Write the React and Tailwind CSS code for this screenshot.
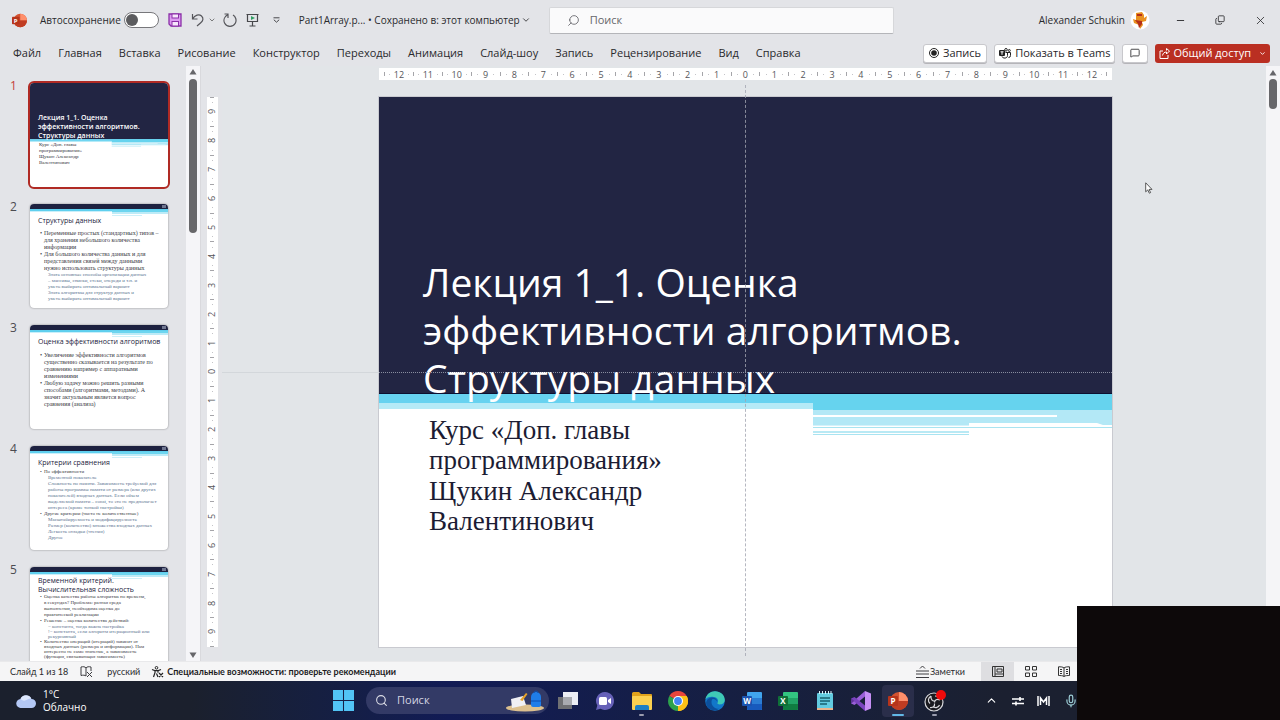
import React from "react";
import { Search, ChevronDown, ChevronUp, Minus, X, Copy, MessageSquare, Mic } from "lucide-react";

const UI = "font-['Open_Sans','Noto_Sans',sans-serif]";

const MENU = ["Файл", "Главная", "Вставка", "Рисование", "Конструктор", "Переходы", "Анимация", "Слайд-шоу", "Запись", "Рецензирование", "Вид", "Справка"];

const SLIDES = [
  {
    title: ["Структуры данных"],
    gap: "mt-[5px]",
    body: [
      { style: "text-[6px] leading-[7px]", t: ["Переменные простых (стандартных) типов –", "для хранения небольшого количества", "информации"] },
      { style: "text-[6px] leading-[7px]", t: ["Для большого количества данных и для", "представления связей между данными", "нужно использовать структуры данных"] },
      { sub: true, style: "text-[5px] leading-[6px]", t: ["Знать основные способы организации данных", "– массивы, списки, стеки, очереди и т.п. и", "уметь выбирать оптимальный вариант", "Знать алгоритмы для структур данных и", "уметь выбирать оптимальный вариант"] },
    ],
  },
  {
    title: ["Оценка эффективности алгоритмов"],
    gap: "mt-[6px]",
    body: [
      { style: "text-[6px] leading-[7px]", t: ["Увеличение эффективности алгоритмов", "существенно сказывается на результате по", "сравнению например с аппаратными", "изменениями"] },
      { style: "text-[6px] leading-[7px]", t: ["Любую задачу можно решить разными", "способами (алгоритмами, методами). А", "значит актуальным является вопрос", "сравнения (анализа)"] },
    ],
  },
  {
    title: ["Критерии сравнения"],
    gap: "mt-[2px]",
    body: [
      { style: "text-[5px] leading-[6px]", t: ["По эффективности"] },
      { sub: true, style: "text-[5px] leading-[6px]", t: ["Временной показатель", "Сложность по памяти. Зависимость требуемой для", "работы программы памяти от размера (или других", "показателей) входных данных. Если объем", "выделяемой памяти – const, то это не предполагает", "интереса (кроме тонкой настройки)"] },
      { style: "text-[5px] leading-[6px]", t: ["Другие критерии (часто не количественные)"] },
      { sub: true, style: "text-[5px] leading-[6px]", t: ["Масштабируемость и модифицируемость", "Размер (количество) множества входных данных", "Легкость отладки (чтения)", "Другое"] },
    ],
  },
  {
    title: ["Временной критерий.", "Вычислительная сложность"],
    gap: "mt-0",
    body: [
      { style: "text-[5px] leading-[6px]", t: ["Оценка качества работы алгоритма по времени,", "в секундах? Проблема: разная среда", "выполнения, необходима оценка до", "практической реализации"] },
      { style: "text-[5px] leading-[6px]", t: ["Решение – оценка количества действий:"] },
      { sub: true, style: "text-[5px] leading-[5px]", t: ["= константа, тогда важна настройка", "!= константа, если алгоритм итерационный или", "рекурсивный"] },
      { style: "text-[5px] leading-[5px]", t: ["Количество операций (итераций) зависит от", "входных данных (размера и информации). Нам", "интересно не само значение, а зависимость", "(функция, связывающая зависимость)"] },
    ],
  },
];

function TitleArt() {
  return (
    <svg className="absolute inset-0 h-full w-full" viewBox="0 0 733 550" preserveAspectRatio="none" aria-hidden="true">
      <rect width="733" height="297" fill="#222543" />
      <rect y="296" width="733" height="1" fill="#0c1030" />
      <rect y="297" width="733" height="10" fill="#67d2f0" />
      <rect y="306" width="434" height="6" fill="#b5eaf7" />
      <rect x="434" y="297" width="299" height="16" fill="#66d3ee" />
      <rect x="434" y="313" width="299" height="15" fill="#b3e8f6" />
      <rect x="434" y="318" width="244" height="2" fill="#fff" />
      <path d="M590 326h128l6 2h9v2H590z" fill="#fff" />
      <rect x="434" y="328" width="156" height="1" fill="#d4f2fa" />
      <rect x="434" y="330" width="299" height="1" fill="#a9e4f1" />
      <rect x="434" y="334" width="156" height="2" fill="#b9e9f4" />
      <rect x="434" y="337" width="156" height="1" fill="#a9e4f1" />
    </svg>
  );
}

function ContentArt() {
  return (
    <svg className="absolute inset-0 h-full w-full" viewBox="0 0 138 104" preserveAspectRatio="none" aria-hidden="true">
      <rect width="138" height="5" fill="#1d2140" />
      <rect y="5" width="138" height="2" fill="#5fcfee" />
      <rect y="7" width="82" height="1" fill="#c9effa" />
      <rect x="82" y="6" width="56" height="2" fill="#6dd5ef" />
      <rect x="82" y="8" width="56" height="2" fill="#bdebf7" />
      <rect x="82" y="11" width="30" height="1" fill="#cdf0f9" />
      <rect x="132" y="1" width="4" height="3" fill="#6f7690" />
    </svg>
  );
}

function SlideThumb({ n, children, active }) {
  return (
    <li className="flex items-start">
      <span className={`-mt-1 w-[30px] shrink-0 pl-[10px] text-[12px] leading-[14px] ${active ? "text-[#c43e3a]" : "text-[#4b4b50]"}`}>{n}</span>
      <button
        aria-label={`Слайд ${n}`}
        className={`relative flex aspect-[138/104] w-[138px] shrink-0 flex-col items-stretch justify-start overflow-hidden rounded-[4px] bg-white text-left ${active ? "outline-2 outline-[#b02a24]" : "shadow-[0_0_2px_rgba(0,0,0,0.45)]"}`}
      >
        {children}
      </button>
    </li>
  );
}

function ContentThumb({ slide }) {
  return (
    <>
      <ContentArt />
      <span className={`relative flex flex-col pl-2 ${slide.title.length > 1 ? "pt-[9px]" : "pt-[12px]"}`}>
        {slide.title.map((l) => (
          <span key={l} className="block text-[7px] leading-[9px] whitespace-nowrap text-[#23233c]">{l}</span>
        ))}
        <span className={`flex flex-col font-['Liberation_Serif',serif] ${slide.gap}`}>
          {slide.body.map((b, i) => (
            <span key={i} className={`relative block whitespace-nowrap ${b.style} ${b.sub ? "pl-[10px] text-[#5a7390]" : "pl-[6px] text-[#3a3a44]"}`}>
              {!b.sub && <span className="absolute top-0 left-[2px]">•</span>}
              {b.t.map((l, k) => (
                <span key={k} className="block">{l}</span>
              ))}
            </span>
          ))}
        </span>
      </span>
    </>
  );
}

function Ruler({ max, vertical }) {
  const nums = Array.from({ length: max * 2 + 1 }, (_, i) => Math.abs(i - max));
  const tick = vertical ? "h-px w-1 bg-[#a5a5a9]" : "h-1 w-px bg-[#a5a5a9]";
  const dot = "size-px bg-[#c4c4c8]";
  return (
    <div className={`flex items-center justify-between bg-white text-[9px] leading-[9px] text-[#55555a] ${vertical ? "min-h-0 w-[11px] flex-1 flex-col" : "h-3 px-[5px]"}`}>
      {nums.map((n, i) => (
        <div key={i} className={`flex flex-1 items-center justify-between ${vertical ? "min-h-0 flex-col" : ""}`}>
          <i className={tick} />
          <i className={dot} />
          <span className={vertical ? "-rotate-90" : ""}>{n}</span>
          <i className={dot} />
          <i />
        </div>
      ))}
      <i className={tick} />
    </div>
  );
}

function Arrow({ down }) {
  return (
    <svg viewBox="0 0 8 6" className="h-[6px] w-2 shrink-0" aria-hidden="true">
      <path d={down ? "M0.5 0.5h7L4 6z" : "M0.5 5.5h7L4 0z"} fill="#66666a" />
    </svg>
  );
}

function PptIcon({ className }) {
  return (
    <svg viewBox="0 0 20 20" className={className} aria-hidden="true">
      <circle cx="11" cy="10" r="9" fill="#d35230" />
      <path d="M11 1a9 9 0 0 1 9 9h-9z" fill="#ff8f6b" />
      <path d="M2 10h18a9 9 0 0 1-18 0z" fill="#c03c22" />
      <rect x="0" y="5" width="10" height="10" rx="1" fill="#b7341b" />
      <text x="5" y="13" textAnchor="middle" fontSize="8" fontWeight="700" fill="#fff" fontFamily="Open Sans, sans-serif">P</text>
    </svg>
  );
}

function OfficeIcon({ letter, colors }) {
  return (
    <svg viewBox="0 0 20 20" className="size-5" aria-hidden="true">
      <rect x="5" y="1" width="15" height="18" rx="1" fill={colors[0]} />
      <rect x="5" y="7" width="15" height="6" fill={colors[1]} />
      <path d="M5 13h15v5a1 1 0 0 1-1 1H6a1 1 0 0 1-1-1z" fill={colors[2]} />
      <rect x="0" y="5" width="10" height="10" rx="1" fill={colors[3]} />
      <text x="5" y="13" textAnchor="middle" fontSize="8" fontWeight="700" fill="#fff" fontFamily="Open Sans, sans-serif">{letter}</text>
    </svg>
  );
}

const TASKS = [
  ["Представление задач", <svg viewBox="0 0 20 20" className="size-5"><rect x="5" y="1" width="15" height="13" fill="#eceef4" /><rect x="0" y="6" width="14" height="12" fill="#6f7073" /><rect x="5" y="6" width="9" height="8" fill="#a9abb0" /></svg>],
  ["Чат", <svg viewBox="0 0 20 20" className="size-5"><path d="M10 1a9 9 0 1 1-4.500 16.800L1 19l1.300-4.400A9 9 0 0 1 10 1z" fill="#6661b8" /><rect x="4" y="6" width="8" height="8" rx="1.500" fill="#fff" /><path d="m13 9 3-2v6l-3-2z" fill="#fff" /></svg>],
  ["Проводник", <svg viewBox="0 0 22 20" className="h-5 w-[22px]"><path d="M1 2.500A1.500 1.500 0 0 1 2.500 1H8l2 2h10a1 1 0 0 1 1 1v4H1z" fill="#e0a21c" /><rect x="1" y="5" width="20" height="14" rx="1" fill="#fbd050" /><path d="M4 19v-3a2 2 0 0 1 2-2h10a2 2 0 0 1 2 2v3z" fill="#1e7fc4" /></svg>, "dot"],
  ["Chrome", <svg viewBox="0 0 20 20" className="size-5"><path d="M10 10 1.340 5a10 10 0 0 1 17.320 0z" fill="#e8453c" /><path d="M10 10 18.660 5A10 10 0 0 1 10 20z" fill="#fbc116" /><path d="M10 10v10A10 10 0 0 1 1.340 5z" fill="#2ca24c" /><path d="M10 5h8.700A10 10 0 0 1 10 20l4.300-7.500z" fill="#fbc116" /><circle cx="10" cy="10" r="5" fill="#fff" /><circle cx="10" cy="10" r="3.900" fill="#4285f4" /></svg>],
  ["Edge", <svg viewBox="0 0 20 20" className="size-5"><circle cx="10" cy="10" r="9.800" fill="#1277c9" /><path d="M.4 8.500C1.500 3 5.500.2 10 .2c5.500 0 9.800 4 9.800 8.600 0 3-2.300 4.700-4.800 4.700-2 0-3-.8-2.400-1.700C14.500 8.500 11 5.500 7 5.800 3.500 6 1.200 7 .4 8.500z" fill="#3fc9b6" /><path d="M7 8.500c-1.600 3.500.5 9 7 9.300-4 3-10.500 1.500-12.500-3.300C0 10 3 6.500 7.500 6.500c3 0 4.800 2 4.300 3.800C10.500 8 8.500 7.500 7 8.500z" fill="#0c4f9c" /></svg>],
  ["Word", <OfficeIcon letter="W" colors={["#41a5ee", "#2b7cd3", "#185abd", "#1b53b0"]} />],
  ["Excel", <OfficeIcon letter="X" colors={["#33c481", "#21a366", "#107c41", "#0f7038"]} />],
  ["Блокнот", <svg viewBox="0 0 18 20" className="h-5 w-[18px]"><rect x="1" y="2" width="16" height="17" rx="1" fill="#62cbe0" /><rect x="1" y="17" width="16" height="2" fill="#e9b48b" /><path d="M4 7h10M4 10h10M4 13h7" stroke="#17616f" strokeWidth="1.300" /><path d="M3.500 0v3M6.500 0v3M9.500 0v3M12.500 0v3M15 0v3" stroke="#d8f4fa" /></svg>],
  ["Visual Studio", <svg viewBox="0 0 20 20" className="size-5"><path d="M14 0l6 2.500v15L14 20V0z" fill="#c78ff5" /><path d="M14 0v5.500L3.500 14 0 12.500 1.500 11z" fill="#9a5fd8" /><path d="M0 7.500 3.500 6 14 14.500V20L1.500 9z" fill="#7a43bf" /><path d="M0 7.500v5l3-2.500z" fill="#5f3299" /></svg>],
  ["PowerPoint", <PptIcon className="size-5" />, "active"],
  ["OBS Studio", <svg viewBox="0 0 24 22" className="h-[22px] w-6"><circle cx="11" cy="12" r="9" fill="#1a1a1f" stroke="#d8d8dc" strokeWidth="1.200" /><path d="M8 6c-.5 3.500 1.500 5 3.500 5.200M17 10c-3-1.500-5.500 0-5.500 2.500M7 17.500c3 .5 5-1.500 4.500-4M8 6c-3 2-3.500 5-1 7.500M16.500 15c-1 2.500-4 3.500-6 1.500M12 6c2.500 0 4 1.500 4.500 4" fill="none" stroke="#d8d8dc" strokeWidth="1.200" /><circle cx="18" cy="5" r="5" fill="#f00b0b" /></svg>, "dot"],
];

function RibbonButton({ children, className, label }) {
  return (
    <button aria-label={label} className={`flex h-[19px] items-center gap-1 rounded-[3px] border border-[#c8c8cc] bg-white text-[11px] leading-4 whitespace-nowrap text-[#27272a] shadow-[0_1px_0_#b5b5b9] ${className}`}>
      {children}
    </button>
  );
}

export default function App() {
  return (
    <div className={`${UI} flex h-screen w-full flex-col overflow-hidden bg-[#e3e4e8] text-[#2a2a2d]`}>
      <header className="shrink-0">
        <div className="flex h-10 items-center pl-3">
          <PptIcon className="size-[15px]" />
          <label htmlFor="autosave" className="ml-[13px] text-[10px] whitespace-nowrap">Автосохранение</label>
          <input
            id="autosave"
            type="checkbox"
            className="ml-[3px] h-4 w-[35px] shrink-0 appearance-none rounded-full border border-[#77777b] bg-white p-px before:block before:size-3 before:rounded-full before:bg-[#5c5c5f] before:content-['']"
          />
          <div className="ml-[9px] flex items-center">
            <button aria-label="Сохранить">
              <svg viewBox="0 0 14 14" className="size-[14px]"><path d="M1 1h12v12H3l-2-2z" fill="#dc9af0" stroke="#8b2fa8" strokeWidth="1.300" /><rect x="4" y="1" width="6.500" height="4" fill="#f6e6fb" stroke="#8b2fa8" /><rect x="4" y="8.500" width="6.500" height="4.500" fill="#f6e6fb" stroke="#8b2fa8" /></svg>
            </button>
            <button aria-label="Отменить" className="ml-[9px]">
              <svg viewBox="0 0 13 14" className="h-[14px] w-[13px]"><path d="M1.500 1v5h5M1.500 6C4 2 8 .8 10.500 3s1.500 5-1 7L6 13" fill="none" stroke="#55555a" strokeWidth="1.200" /></svg>
            </button>
            <ChevronDown className="ml-1 size-2 text-[#444]" />
            <button aria-label="Повторить" className="ml-[7px]">
              <svg viewBox="0 0 14 15" className="h-[15px] w-[14px]"><path d="M1.500 1H5v4M5 1.500C1.500 3.500 0 7 1.700 10.300c2 4 8.300 4.300 10.600 0C14 7 12.500 3.500 10 2" fill="none" stroke="#55555a" strokeWidth="1.200" /></svg>
            </button>
            <button aria-label="С начала" className="ml-[9px]">
              <svg viewBox="0 0 13 14" className="h-[14px] w-[13px]"><path d="M.5 1.500h12M1.500 1.500v7h10v-7M6.500 8.500v4M3.500 13h6" fill="none" stroke="#47474b" strokeWidth="1.200" /><path d="m5 3 4 2-4 2z" fill="#2f9f63" /></svg>
            </button>
            <button aria-label="Настройка панели" className="ml-[14px]">
              <svg viewBox="0 0 7 6" className="h-[6px] w-[7px]"><path d="M.5.8h6M.8 2.700 3.500 5.200 6.200 2.700" fill="none" stroke="#47474b" /></svg>
            </button>
          </div>
          <button className="ml-[19px] flex items-center gap-px text-[10px] whitespace-nowrap">
            Part1Array.p... • Сохранено в: этот компьютер <ChevronDown className="size-[10px]" />
          </button>
          <label className="ml-[18px] flex h-[27px] w-[345px] min-w-0 items-center gap-[10px] rounded-[2px] border border-[#d6d7da] border-b-[#b4b5b9] bg-[#fafafb] px-[17px]">
            <Search className="size-[13px] shrink-0 -scale-x-100 text-[#5d5d62]" strokeWidth={1.5} />
            <input aria-label="Поиск" placeholder="Поиск" className="min-w-0 flex-1 bg-transparent text-[11px] outline-none placeholder:text-[#66666a]" />
          </label>
          <div className="ml-auto flex items-center">
            <span className="text-[10px] whitespace-nowrap">Alexander Schukin</span>
            <svg viewBox="0 0 20 20" className="ml-[5px] size-5 shrink-0" aria-hidden="true"><circle cx="10" cy="10" r="9.500" fill="#fff" /><path d="M6 3l6-1 2 3v3l3-2-1 5-4 1 1 3-3 4-1-4-5-2-1-4 3 1z" fill="#e9901f" /><path d="M7 4h5v2H7zM5 10l7 1v3l-3 4-1-4z" fill="#b52f18" /></svg>
            <button aria-label="Свернуть" className="flex w-10 justify-center pl-5"><Minus className="size-[11px]" strokeWidth={2} /></button>
            <button aria-label="Восстановить" className="ml-[10px] flex w-10 justify-center"><Copy className="size-[10px] -scale-y-100" strokeWidth={2} /></button>
            <button aria-label="Закрыть" className="flex w-10 justify-center"><X className="size-[13px]" strokeWidth={1.5} /></button>
          </div>
        </div>
        <div className="flex h-[26px] items-center justify-between pr-[10px] pl-[13px]">
          <nav className="flex gap-[17px] text-[11px] leading-4">
            {MENU.map((m) => <button key={m} className="whitespace-nowrap">{m}</button>)}
          </nav>
          <div className="flex items-center">
            <RibbonButton className="px-[5px]">
              <svg viewBox="0 0 10 10" className="size-[10px]"><circle cx="5" cy="5" r="4.500" fill="none" stroke="#222" /><circle cx="5" cy="5" r="2.800" fill="#222" /></svg>
              Запись
            </RibbonButton>
            <RibbonButton className="ml-[7px] px-1">
              <svg viewBox="0 0 12 11" className="h-[11px] w-3"><rect x="0" y="2" width="6" height="6" rx="1" fill="#222" /><path d="M1.500 3.800h3M3 3.800v3" stroke="#fff" /><circle cx="7" cy="1.800" r="1.300" fill="none" stroke="#222" /><circle cx="10.300" cy="2.500" r="1" fill="none" stroke="#222" /><path d="M6.500 4.500h5v3a2 2 0 0 1-2 2M3 8.500c.5 2 5.500 2.500 5.500-1v-3" fill="none" stroke="#222" /></svg>
              Показать в Teams
            </RibbonButton>
            <RibbonButton className="ml-[7px] px-[6px]" label="Комментарии"><MessageSquare className="mx-px size-[10px]" strokeWidth={2} /></RibbonButton>
            <button className="ml-[7px] flex h-[19px] items-center gap-[3px] rounded-[3px] bg-[#ba2f22] px-1 text-[11px] leading-4 whitespace-nowrap text-white">
              <svg viewBox="0 0 11 11" className="size-[11px]"><path d="M4 3H1v7.500h8V7M3.500 7.500C4 5 5.500 4 7.500 4v2l3-3-3-2.500v2" fill="none" stroke="#fff" /></svg>
              Общий доступ
              <ChevronDown className="ml-[5px] size-[7px]" strokeWidth={3} />
            </button>
          </div>
        </div>
      </header>

      <main className="flex min-h-0 flex-1">
        <aside className="w-[186px] shrink-0 overflow-hidden pt-[17px]">
          <ol className="flex flex-col gap-[17px]">
            <SlideThumb n={1} active>
              <TitleArt />
              <span className="relative block pt-[30px] pl-2 whitespace-nowrap">
                <span className="block text-[7px] leading-[9px] font-semibold text-white">Лекция 1_1. Оценка<br />эффективности алгоритмов.<br />Структуры данных</span>
                <span className="mt-[2px] block pl-px font-['Liberation_Serif',serif] text-[5px] leading-[6px] text-[#33333c]">Курс «Доп. главы<br />программирования»<br />Щукин Александр<br />Валентинович</span>
              </span>
            </SlideThumb>
            {SLIDES.map((s, i) => (
              <SlideThumb key={i} n={i + 2}><ContentThumb slide={s} /></SlideThumb>
            ))}
          </ol>
        </aside>
        <div className="flex w-[14px] shrink-0 flex-col items-center bg-[#f5f5f8] pt-[3px] pb-[3px]">
          <Arrow />
          <div className="mt-1 h-[154px] w-2 rounded-full bg-[#67676a]" />
          <div className="flex-1" />
          <Arrow down />
        </div>
        <div className="flex w-[22px] shrink-0 flex-col items-center border-l border-[#d9d9dd] pt-[31px] pb-[14px] pl-px">
          <Ruler max={9} vertical />
        </div>
        <section className="relative min-w-0 flex-1 overflow-hidden bg-[#e2e5e8] pt-[2px] pr-[154px] pl-[157px]">
          <Ruler max={12} />
          <div className="relative mt-[17px]">
            <div className="relative aspect-[733/550] w-full overflow-hidden bg-white shadow-[0_0_0_1px_#c9cad0]">
              <TitleArt />
              <div className="relative pt-[161px] pl-[44px] whitespace-nowrap">
                <h1 className="text-[39px] leading-[48px] text-white">Лекция 1_1. Оценка<br />эффективности алгоритмов.<br />Структуры данных</h1>
                <div className="mt-[13px] flex flex-col gap-px pl-[6px] font-['Liberation_Serif',serif] text-[27px] leading-[30px] text-[#1c1c33]">
                  <p>Курс «Доп. главы<br />программирования»</p>
                  <p>Щукин Александр<br />Валентинович</p>
                </div>
              </div>
            </div>
            <div className="absolute -top-3 -bottom-[9px] left-1/2 -ml-px border-l border-dashed border-[#a3a5b0]/80" />
            <div className="absolute top-1/2 right-0 left-0 border-t border-dotted border-[#a3a7b5]/80" />
            <div className="absolute top-1/2 right-full w-[157px] border-t border-[#d3d7db]" />
          </div>
          <svg viewBox="0 0 8 12" className="absolute top-[116px] right-[113px] h-3 w-2" aria-hidden="true"><path d="M.7.8v9l2.100-1.900 1.500 3.300 1.300-.6-1.500-3.200h2.900z" fill="#fff" stroke="#333" strokeWidth=".8" /></svg>
        </section>
        <div className="flex w-[14px] shrink-0 flex-col items-center bg-[#f5f5f7] pt-1">
          <Arrow />
          <div className="mt-[3px] h-[30px] w-2 rounded-full bg-[#67676a]" />
        </div>
      </main>

      <footer className="flex h-5 shrink-0 items-center border-t border-[#e9e9eb] bg-[#f5f5f6] pl-[10px] font-['Lato','Open_Sans',sans-serif] text-[9px] leading-4">
        <span className="whitespace-nowrap">Слайд 1 из 18</span>
        <svg viewBox="0 0 13 12" className="ml-[12px] h-3 w-[13px]" aria-hidden="true"><path d="M6 2v8C5 9 3 9 1 9.500V1c2-.5 4-.5 5 1 1-1.500 3-1.500 5-1v4M7 6l5 5M12 6l-5 5" fill="none" stroke="#3c3c40" /></svg>
        <span className="ml-[14px]">русский</span>
        <button className="ml-[11px] flex items-center gap-[3px] font-bold whitespace-nowrap text-[#1c1c1e]">
          <svg viewBox="0 0 13 12" className="h-3 w-[13px]"><circle cx="5.500" cy="1.800" r="1.300" fill="none" stroke="#222" /><path d="M1 3.500l3 1.200v2L2.500 11M10 3.500 7 4.700v2M4 4.700h3M5.500 7.500 7 11M8 7l4 4M12 7l-4 4" fill="none" stroke="#222" strokeWidth="1.200" /></svg>
          Специальные возможности: проверьте рекомендации
        </button>
        <div className="ml-auto flex h-full items-center pr-[200px]">
          <button className="flex items-center gap-px">
            <svg viewBox="0 0 13 13" className="h-[13px] w-[13px]"><path d="M4 3.500 6.500 1 9 3.500M0 6h13M0 9h13M0 12.500h13" fill="none" stroke="#3c3c40" /></svg>
            Заметки
          </button>
          <button aria-label="Обычный" className="ml-4 flex h-full w-[33px] items-center justify-center bg-[#dedee1]">
            <svg viewBox="0 0 12 11" className="h-[11px] w-3"><path d="M.5.5h11v10H.5zM3 .5v10M3 8h8.500M5 3h5v3H5z" fill="none" stroke="#333" /></svg>
          </button>
          <button aria-label="Сортировщик" className="flex w-[33px] justify-center">
            <svg viewBox="0 0 12 11" className="h-[11px] w-3"><path d="M.5.5h4v3.500h-4zM7.500.5h4v3.500h-4zM.5 7h4v3.500h-4zM7.500 7h4v3.500h-4z" fill="none" stroke="#333" /></svg>
          </button>
          <button aria-label="Чтение" className="flex w-[33px] justify-center">
            <svg viewBox="0 0 12 11" className="h-[11px] w-3"><path d="M6 2v8.500C5 9.500 2 9.500.5 9.500V.8C2.500.8 5 .8 6 2c1-1.200 3.500-1.200 5.500-1.200v8.700c-1.500 0-4.500 0-5.500 1M2 3.500h2M2 5.500h2M2 7.500h2M8 3.500h2M8 5.500h2M8 7.500h2" fill="none" stroke="#333" /></svg>
          </button>
        </div>
      </footer>

      <nav className="flex h-[39px] shrink-0 items-center bg-linear-to-r from-[#1b202d] from-15% via-[#121b55] via-35% to-[#1b2030] to-78% text-white">
        <button className="flex w-[333px] items-center gap-[7px] pl-4 text-left text-[10px] leading-[13px]">
          <svg viewBox="0 0 20 14" className="h-[14px] w-5"><path d="M5 14a4.500 4.500 0 0 1-.5-9A6 6 0 0 1 15.500 5 4.500 4.500 0 0 1 15.500 14z" fill="#b4c8f5" /><path d="M4.500 5A6 6 0 0 1 15.300 4.500C11 4.500 9 9 4.500 5z" fill="#dde7fd" /></svg>
          <span>1°C<br />Облачно</span>
        </button>
        <button aria-label="Пуск" className="shrink-0">
          <svg viewBox="0 0 20 20" className="size-[21px]"><path d="M0 0h9.500v9.500H0zM10.500 0H20v9.500h-9.500zM0 10.500h9.500V20H0zM10.500 10.500H20V20h-9.500z" fill="#52c4f5" /></svg>
        </button>
        <label className="ml-3 flex h-[27px] w-[183px] shrink-0 items-center gap-[9px] rounded-full bg-[#333a66] pr-1 pl-[9px]">
          <Search className="size-[13px] shrink-0 text-[#dcdde6]" />
          <input aria-label="Поиск в Windows" placeholder="Поиск" className="min-w-0 flex-1 bg-transparent text-[11px] outline-none placeholder:text-[#d5d6e2]" />
          <svg viewBox="0 0 40 22" className="h-[22px] w-10 shrink-0" aria-hidden="true"><ellipse cx="20" cy="18" rx="19" ry="3.500" fill="#dcc08f" /><path d="M6 9l12-3 3 9-14 3z" fill="#f0f0f4" /><path d="M15 10l6-7 1.500 1-5 7z" fill="#e7a32b" /><path d="M26 7a5 5 0 0 1 10 0v8a2 2 0 0 1-2 2h-6a2 2 0 0 1-2-2z" fill="#1f7de8" /><path d="M29 3a2 2 0 0 1 4 0M26 11h10" stroke="#0d4fb0" fill="none" /></svg>
        </label>
        <div className="flex h-full w-[404px] shrink-0 items-center pl-px">
          {TASKS.map(([name, icon, state]) => (
            <button key={name} aria-label={name} className="relative flex h-full flex-1 items-center justify-center">
              <span className={`flex items-center justify-center rounded ${state === "active" ? "size-8 bg-[#2a2e4a]" : ""}`}>{icon}</span>
              {state === "active" && <i className="absolute bottom-1 h-[2px] w-3 rounded-full bg-[#62b8e6]" />}
              {state === "dot" && <i className="absolute bottom-1 h-[2px] w-[5px] rounded-full bg-[#9a9cae]" />}
            </button>
          ))}
        </div>
        <div className="ml-8 flex shrink-0 items-center">
          <ChevronUp className="size-[13px]" />
          <svg viewBox="0 0 12 10" className="ml-[14px] h-[10px] w-3" aria-hidden="true"><path d="M0 3h12M0 7.500h12M8 1v4M4 5.500v4" stroke="#fff" strokeWidth="1.600" /></svg>
          <svg viewBox="0 0 13 10" className="ml-[13px] h-[10px] w-[13px]" aria-hidden="true"><path d="M1 0v10M12 0v10M3.500 9V2l3 4 3-4v7" fill="none" stroke="#fff" strokeWidth="1.500" /></svg>
          <Mic className="ml-[14px] size-[14px] text-[#9fd0d8]" />
        </div>
      </nav>

      <div className="fixed right-0 bottom-0 h-[114px] w-[203px] bg-[#0d090a]" />
    </div>
  );
}
